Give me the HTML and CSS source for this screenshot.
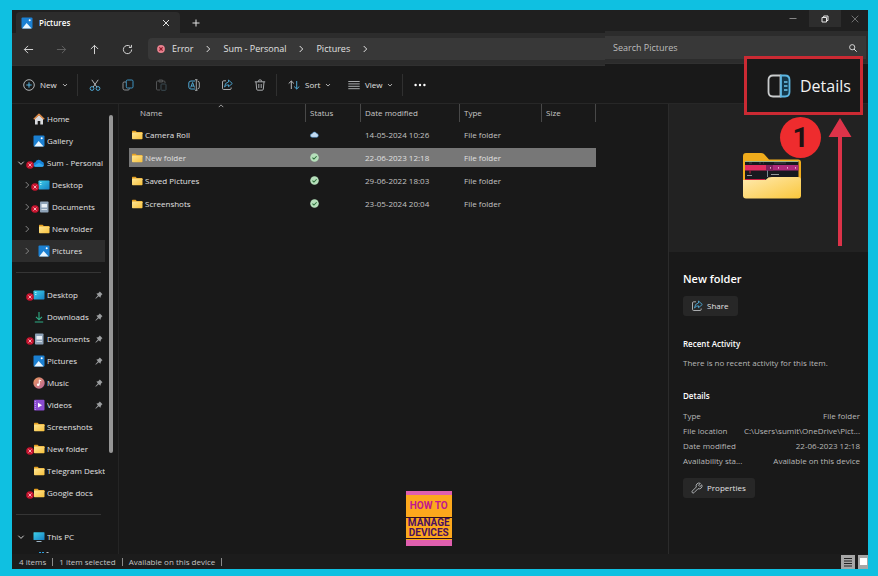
FILE: index.html
```html
<!doctype html>
<html lang="en" dir="ltr">
<head>
    <meta charset="utf-8">
    <meta name="viewport" content="width=device-width, initial-scale=1">
    <title>Pictures</title>
    <link rel="stylesheet" href="styles.css">
</head>
<body>

<!-- Icon sprite -->
<svg class="sprite" aria-hidden="true">
    <defs>
        <linearGradient id="g-folder" x1="0" y1="0" x2="1" y2="1"><stop offset="0" stop-color="#ffe694"/><stop offset="1" stop-color="#f7c03c"/></linearGradient>
        <linearGradient id="g-front" x1="0" y1="0" x2="1" y2="1"><stop offset="0" stop-color="#ffeab0"/><stop offset="1" stop-color="#fac73c"/></linearGradient>
        <linearGradient id="g-desktop" x1="0" y1="0" x2="1" y2="1"><stop offset="0" stop-color="#3fd0e8"/><stop offset="1" stop-color="#1580c4"/></linearGradient>
        <linearGradient id="g-music" x1="0" y1="0" x2="1" y2="1"><stop offset="0" stop-color="#ec9a5c"/><stop offset="1" stop-color="#b9659c"/></linearGradient>
    </defs>
    <symbol id="i-folder" viewBox="0 0 12 12"><path d="M1 2.500q0-.7.7-.7H4.600l1.200 1.200H10.800q.7 0 .7.700V5H1z" fill="#e5a020"/><rect x="1" y="3.600" width="10.500" height="6.600" rx=".7" fill="url(#g-folder)"/></symbol>
    <symbol id="i-picture" viewBox="0 0 12 12"><rect x=".5" y=".5" width="11" height="11" rx="1" fill="#1b80d2"/><path d="M1.200 11.500 5.600 6l5 5.500z" fill="#e8f6ff"/><circle cx="8.700" cy="3.200" r="1" fill="#fff"/></symbol>
    <symbol id="i-home" viewBox="0 0 12 12"><path d="M2 5.500 6 2l4 3.500v6H7.300V8H4.700v3.500H2z" fill="#d8dade"/><path d="m.8 6.300 5.200-5 5.200 5" fill="none" stroke="#e08a45" stroke-width="1.500" stroke-linejoin="round"/></symbol>
    <symbol id="i-onedrive" viewBox="0 0 12 12"><path d="M2.600 9.800a2.300 2.300 0 0 1-.3-4.600A3.600 3.600 0 0 1 8.800 4.600a2.700 2.700 0 0 1 .4 5.200z" fill="#1583da"/><path d="m1 8.800 5-3 5 3q-.7 1-1.800 1H2.600q-1 0-1.600-1z" fill="#35a8ef"/></symbol>
    <symbol id="i-desktop" viewBox="0 0 12 12"><rect x=".5" y="1.500" width="11" height="9" rx=".8" fill="url(#g-desktop)"/><path d="M2 3.500h1.500M2 5.500h1.500" stroke="#c6f4ff" stroke-width=".8"/></symbol>
    <symbol id="i-document" viewBox="0 0 12 12"><rect x="2" y=".5" width="8.500" height="11" rx=".8" fill="#8fa3b8"/><rect x="3.500" y="3" width="5.500" height="3.500" fill="#e9f0f6"/><path d="M3.500 8.500h5.500" stroke="#d3dde6"/></symbol>
    <symbol id="i-download" viewBox="0 0 12 12"><path d="M6 1v7.500M3 5.800l3 3 3-3M1.800 11h8.400" fill="none" stroke="#2fae86" stroke-width="1.100"/></symbol>
    <symbol id="i-music" viewBox="0 0 12 12"><circle cx="6" cy="6" r="5.700" fill="url(#g-music)"/><path d="M6.300 7.500V3l2 .8" fill="none" stroke="#fff"/><circle cx="5.200" cy="7.800" r="1.300" fill="#fff"/></symbol>
    <symbol id="i-video" viewBox="0 0 12 12"><rect x="1" y=".7" width="10.500" height="10.800" rx="1" fill="#8a4bd0"/><path d="M2.300 2v9" stroke="#c9a4f0" stroke-dasharray="1 1"/><path d="m5 3.800 4 2.400-4 2.400z" fill="#fff"/></symbol>
    <symbol id="i-pc" viewBox="0 0 12 12"><rect x=".5" y="1.200" width="11" height="7.800" rx=".6" fill="url(#g-desktop)"/><path d="M3.500 10.500h5" stroke="#9fb6c6"/></symbol>
    <symbol id="i-drive" viewBox="0 0 12 12"><path d="M1 1.500h2M4 1.500h2" stroke="#2c9fe0"/><path d="M8.500 1.500h2" stroke="#b9bcbe"/><rect x="1" y="3" width="10" height="6" fill="#8d9aa5"/></symbol>
    <symbol id="i-down" viewBox="0 0 8 8"><path d="m1.300 2.700 2.700 2.700 2.700-2.700" fill="none" stroke="currentColor"/></symbol>
    <symbol id="i-right" viewBox="0 0 8 8"><path d="m2.700 1 3 3-3 3" fill="none" stroke="currentColor"/></symbol>
    <symbol id="i-pin" viewBox="0 0 8 8"><path d="M4.800.5 7.500 3.200 6.700 3.800 5.800 4.900 5.500 6.700 3.700 5.200.8 7.700.4 7.300 2.900 4.400 1.400 2.600 3.200 2.200 4.200 1.300z" fill="#9c9ea0"/></symbol>
    <symbol id="i-error" viewBox="0 0 8 8"><circle cx="4" cy="4" r="3.800" fill="#c8142f"/><path d="m2.500 2.500 3 3m0-3-3 3" stroke="#ffd9de" stroke-width=".8"/></symbol>
    <symbol id="i-check" viewBox="0 0 8 8"><circle cx="4" cy="4" r="3.800" fill="#b5dfba"/><path d="m2.200 4.100 1.300 1.300 2.400-2.500" fill="none" stroke="#276b35" stroke-width=".9"/></symbol>
    <symbol id="i-cloud" viewBox="0 0 8 8"><path d="M2 6.500a1.600 1.600 0 0 1-.1-3.200 2.200 2.200 0 0 1 4.100-.1 1.700 1.700 0 0 1 .2 3.300z" fill="#c4dcf2" stroke="#4a90cb" stroke-width=".5"/></symbol>
    <symbol id="i-share" viewBox="0 0 12 12"><path d="M5 1.800H2.700q-1.200 0-1.200 1.200v6.300q0 1.200 1.200 1.200H9q1.200 0 1.200-1.200V8.500" fill="none" stroke="#b9bcbe" stroke-width=".9"/><path d="M7.500 1 11.300 4.500 7.500 7.700V5.800Q5 5.700 3.500 8 3.800 3.500 7.500 3z" fill="none" stroke="#4fa9d6" stroke-width=".9" stroke-linejoin="round"/></symbol>
</svg>

<main class="window">
    <!-- Tabs, navigation and search -->
    <header class="header">
        <div class="header-main">
            <div class="tabs">
                <div class="tab">
                    <svg class="icon"><use href="#i-picture"/></svg>
                    <span class="tab-title">Pictures</span>
                    <button class="icon-btn tab-close" aria-label="Close tab"><svg class="icon-sm" viewBox="0 0 8 8"><path d="m1 1 6 6m0-6-6 6" stroke="currentColor"/></svg></button>
                </div>
                <button class="icon-btn tab-new" aria-label="New tab"><svg class="icon-sm" viewBox="0 0 8 8"><path d="M4 .5v7M.5 4h7" stroke="currentColor"/></svg></button>
            </div>
            <div class="navigation">
                <button class="icon-btn nav-btn" aria-label="Back"><svg class="icon-nav" viewBox="0 0 12 12"><path d="M11 6H1.500M5.500 2l-4 4 4 4" fill="none" stroke="currentColor"/></svg></button>
                <button class="icon-btn nav-btn" aria-label="Forward" disabled><svg class="icon-nav" viewBox="0 0 12 12"><path d="M1 6h9.500M6.500 2l4 4-4 4" fill="none" stroke="currentColor"/></svg></button>
                <button class="icon-btn nav-btn" aria-label="Up"><svg class="icon-nav" viewBox="0 0 12 12"><path d="M6 11V1.500M2 5.500l4-4 4 4" fill="none" stroke="currentColor"/></svg></button>
                <button class="icon-btn nav-btn" aria-label="Refresh"><svg class="icon-nav" viewBox="0 0 12 12"><path d="M10.500 6a4.500 4.500 0 1 1-1.500-3.300M10.300 1v2.800H7.500" fill="none" stroke="currentColor"/></svg></button>
                <nav class="address" aria-label="Address">
                    <svg class="icon-error" viewBox="0 0 8 8"><circle cx="4" cy="4" r="3.900" fill="#e8818e"/><path d="m2.400 2.400 3.200 3.200m0-3.200L2.400 5.600" stroke="#8c1526" stroke-width="1.200"/></svg>
                    <a href="#">Error</a>
                    <svg class="icon-sm"><use href="#i-right"/></svg>
                    <a href="#">Sum - Personal</a>
                    <svg class="icon-sm"><use href="#i-right"/></svg>
                    <a href="#">Pictures</a>
                    <svg class="icon-sm"><use href="#i-right"/></svg>
                </nav>
            </div>
        </div>
        <div class="header-side">
            <div class="controls">
                <button class="icon-btn control" aria-label="Minimize"><svg class="icon-sm" viewBox="0 0 8 8"><path d="M.5 3.500h7" stroke="currentColor"/></svg></button>
                <button class="icon-btn control control-active" aria-label="Restore"><svg class="icon-sm" viewBox="0 0 8 8"><path d="M1 2.500h4.500V7H1zM2.700 2.300V1h4.300v4.500H5.700" fill="none" stroke="currentColor"/></svg></button>
                <button class="icon-btn control" aria-label="Close"><svg class="icon-sm" viewBox="0 0 8 8"><path d="m.7.7 6.600 6.600m0-6.600L.7 7.300" stroke="currentColor" stroke-width=".8"/></svg></button>
            </div>
            <div class="search-row">
                <label class="search">
                    <input type="search" class="search-input" placeholder="Search Pictures" aria-label="Search Pictures">
                    <svg class="icon-sm" viewBox="0 0 8 8"><path d="m5 5 2.700 2.700" stroke="currentColor"/><circle cx="3.200" cy="3.200" r="2.600" fill="none" stroke="currentColor" stroke-width=".9"/></svg>
                </label>
            </div>
        </div>
    </header>

    <!-- Command bar -->
    <div class="toolbar" role="toolbar" aria-label="Commands">
        <button class="tool tool-new"><svg class="icon" viewBox="0 0 12 12"><circle cx="6" cy="6" r="5.300" fill="none" stroke="#c4c7c9" stroke-width=".9"/><path d="M6 3.300v5.400M3.300 6h5.400" stroke="#58b4e0"/></svg><span>New</span><svg class="icon-xs"><use href="#i-down"/></svg></button>
        <span class="separator"></span>
        <button class="tool tool-icon" aria-label="Cut"><svg class="icon" viewBox="0 0 12 12"><path d="M2.800.8 7.800 8M9.200.8 4.200 8" stroke="#c4c7c9" stroke-width=".9"/><circle cx="3" cy="9.500" r="1.900" fill="none" stroke="#4fa9d6"/><circle cx="9" cy="9.500" r="1.900" fill="none" stroke="#4fa9d6"/></svg></button>
        <button class="tool tool-icon" aria-label="Copy"><svg class="icon" viewBox="0 0 12 12"><path d="M4 3H2.300Q1 3 1 4.300v5Q1 11 2.700 11h3.500Q7.300 11 7.500 9.500" fill="none" stroke="#8c9093"/><rect x="4.300" y="1" width="6.700" height="8" rx="1.200" fill="none" stroke="#3f93c0"/></svg></button>
        <button class="tool tool-icon tool-off" aria-label="Paste" disabled><svg class="icon" viewBox="0 0 12 12"><path d="M5 11H2.700Q1.500 11 1.500 10V3q0-1 1-1H9q1 0 1 1v1M4 1h3.500v2H4z" fill="none" stroke="#696c6e"/><rect x="6" y="5" width="5" height="6.300" rx=".8" fill="none" stroke="#48606b"/></svg></button>
        <button class="tool tool-icon" aria-label="Rename"><svg class="icon" viewBox="0 0 12 12"><path d="M7 2H3Q.8 2 .8 4v4q0 2 2.200 2H7" fill="none" stroke="#4fa9d6"/><path d="M9.500 2q1.800.3 1.800 2v4q0 1.700-1.800 2M7 .7h2.500M7 11.300h2.500M8.300.7v10.600" fill="none" stroke="#b0b4b6" stroke-width=".9"/><path d="m2.700 8.500 1.900-5 1.900 5M3.400 7h2.500" fill="none" stroke="#58b4e0" stroke-width=".9"/></svg></button>
        <button class="tool tool-icon" aria-label="Share"><svg class="icon"><use href="#i-share"/></svg></button>
        <button class="tool tool-icon" aria-label="Delete"><svg class="icon" viewBox="0 0 12 12"><path d="M.8 2.800h10.400M4.300 2.500Q4.300.8 6 .8t1.700 1.700M2 3l.7 7.200q.1 1 1 1h4.600q.9 0 1-1L10 3M4.800 5v4M7.200 5v4" fill="none" stroke="#b9bcbe" stroke-width=".9"/></svg></button>
        <span class="separator"></span>
        <button class="tool tool-sort"><svg class="icon" viewBox="0 0 12 12"><path d="M3.300 10V2M.7 4.500 3.300 2l2.600 2.500" fill="none" stroke="#b9bcbe"/><path d="M8.700 2v8M6.100 7.500 8.700 10l2.600-2.500" fill="none" stroke="#4fa9d6"/></svg><span>Sort</span><svg class="icon-xs"><use href="#i-down"/></svg></button>
        <button class="tool tool-view"><svg class="icon" viewBox="0 0 12 12"><path d="M.3 2.500h11.400M.3 4.900h11.400M.3 7.300h11.400M.3 9.700h11.400" stroke="#b9bcbe" stroke-width=".9"/></svg><span>View</span><svg class="icon-xs"><use href="#i-down"/></svg></button>
        <span class="separator"></span>
        <button class="tool tool-icon" aria-label="More"><svg class="icon" viewBox="0 0 12 12"><circle cx="1.600" cy="6" r="1.200" fill="#fff"/><circle cx="6" cy="6" r="1.200" fill="#fff"/><circle cx="10.400" cy="6" r="1.200" fill="#fff"/></svg></button>
    </div>

    <div class="content">
        <!-- Folder tree -->
        <aside class="sidebar">
            <nav class="tree" aria-label="Folders">
                <a class="tree-item" href="#"><span class="tree-arrow"></span><span class="tree-icon"><svg class="icon"><use href="#i-home"/></svg></span><span class="tree-name">Home</span></a>
                <a class="tree-item" href="#"><span class="tree-arrow"></span><span class="tree-icon"><svg class="icon"><use href="#i-picture"/></svg></span><span class="tree-name">Gallery</span></a>
                <a class="tree-item" href="#"><span class="tree-arrow open"><svg class="icon-sm"><use href="#i-down"/></svg></span><span class="tree-icon"><svg class="icon"><use href="#i-onedrive"/></svg><svg class="badge"><use href="#i-error"/></svg></span><span class="tree-name">Sum - Personal</span></a>
                <a class="tree-item nested" href="#"><span class="tree-arrow"><svg class="icon-sm"><use href="#i-right"/></svg></span><span class="tree-icon"><svg class="icon"><use href="#i-desktop"/></svg><svg class="badge"><use href="#i-error"/></svg></span><span class="tree-name">Desktop</span></a>
                <a class="tree-item nested" href="#"><span class="tree-arrow"><svg class="icon-sm"><use href="#i-right"/></svg></span><span class="tree-icon"><svg class="icon"><use href="#i-document"/></svg><svg class="badge"><use href="#i-error"/></svg></span><span class="tree-name">Documents</span></a>
                <a class="tree-item nested" href="#"><span class="tree-arrow"><svg class="icon-sm"><use href="#i-right"/></svg></span><span class="tree-icon"><svg class="icon"><use href="#i-folder"/></svg></span><span class="tree-name">New folder</span></a>
                <a class="tree-item nested selected" href="#" aria-current="page"><span class="tree-arrow"><svg class="icon-sm"><use href="#i-right"/></svg></span><span class="tree-icon"><svg class="icon"><use href="#i-picture"/></svg></span><span class="tree-name">Pictures</span></a>
                <hr class="tree-line">
                <a class="tree-item" href="#"><span class="tree-arrow"></span><span class="tree-icon"><svg class="icon"><use href="#i-desktop"/></svg><svg class="badge"><use href="#i-error"/></svg></span><span class="tree-name">Desktop</span><svg class="icon-sm"><use href="#i-pin"/></svg></a>
                <a class="tree-item" href="#"><span class="tree-arrow"></span><span class="tree-icon"><svg class="icon"><use href="#i-download"/></svg></span><span class="tree-name">Downloads</span><svg class="icon-sm"><use href="#i-pin"/></svg></a>
                <a class="tree-item" href="#"><span class="tree-arrow"></span><span class="tree-icon"><svg class="icon"><use href="#i-document"/></svg><svg class="badge"><use href="#i-error"/></svg></span><span class="tree-name">Documents</span><svg class="icon-sm"><use href="#i-pin"/></svg></a>
                <a class="tree-item" href="#"><span class="tree-arrow"></span><span class="tree-icon"><svg class="icon"><use href="#i-picture"/></svg></span><span class="tree-name">Pictures</span><svg class="icon-sm"><use href="#i-pin"/></svg></a>
                <a class="tree-item" href="#"><span class="tree-arrow"></span><span class="tree-icon"><svg class="icon"><use href="#i-music"/></svg></span><span class="tree-name">Music</span><svg class="icon-sm"><use href="#i-pin"/></svg></a>
                <a class="tree-item" href="#"><span class="tree-arrow"></span><span class="tree-icon"><svg class="icon"><use href="#i-video"/></svg></span><span class="tree-name">Videos</span><svg class="icon-sm"><use href="#i-pin"/></svg></a>
                <a class="tree-item" href="#"><span class="tree-arrow"></span><span class="tree-icon"><svg class="icon"><use href="#i-folder"/></svg></span><span class="tree-name">Screenshots</span></a>
                <a class="tree-item" href="#"><span class="tree-arrow"></span><span class="tree-icon"><svg class="icon"><use href="#i-folder"/></svg><svg class="badge"><use href="#i-error"/></svg></span><span class="tree-name">New folder</span></a>
                <a class="tree-item" href="#"><span class="tree-arrow"></span><span class="tree-icon"><svg class="icon"><use href="#i-folder"/></svg></span><span class="tree-name">Telegram Desktop</span></a>
                <a class="tree-item" href="#"><span class="tree-arrow"></span><span class="tree-icon"><svg class="icon"><use href="#i-folder"/></svg><svg class="badge"><use href="#i-error"/></svg></span><span class="tree-name">Google docs</span></a>
                <hr class="tree-line">
                <a class="tree-item" href="#"><span class="tree-arrow open"><svg class="icon-sm"><use href="#i-down"/></svg></span><span class="tree-icon"><svg class="icon"><use href="#i-pc"/></svg></span><span class="tree-name">This PC</span></a>
                <a class="tree-item nested" href="#" aria-label="Drive"><span class="tree-arrow"></span><span class="tree-icon drive"><svg class="icon"><use href="#i-drive"/></svg></span></a>
            </nav>
            <div class="scrollbar"><div class="scrollbar-thumb"></div></div>
        </aside>

        <!-- File list -->
        <section class="files">
            <table class="file-table">
                <thead>
                    <tr>
                        <th class="col-name"><span>Name</span><svg class="sort-mark" viewBox="0 0 8 8"><path d="m1 5.500 3-3 3 3" fill="none" stroke="currentColor"/></svg></th>
                        <th class="col-status">Status</th>
                        <th class="col-date">Date modified</th>
                        <th class="col-type">Type</th>
                        <th class="col-size">Size</th>
                    </tr>
                </thead>
                <tbody>
                    <tr>
                        <td><span class="file-name"><svg class="icon"><use href="#i-folder"/></svg>Camera Roll</span></td>
                        <td><svg class="icon-status" role="img" aria-label="Online only"><use href="#i-cloud"/></svg></td>
                        <td>14-05-2024 10:26</td><td>File folder</td><td></td>
                    </tr>
                    <tr class="selected">
                        <td><span class="file-name"><svg class="icon"><use href="#i-folder"/></svg>New folder</span></td>
                        <td><svg class="icon-status" role="img" aria-label="Available"><use href="#i-check"/></svg></td>
                        <td>22-06-2023 12:18</td><td>File folder</td><td></td>
                    </tr>
                    <tr>
                        <td><span class="file-name"><svg class="icon"><use href="#i-folder"/></svg>Saved Pictures</span></td>
                        <td><svg class="icon-status" role="img" aria-label="Available"><use href="#i-check"/></svg></td>
                        <td>29-06-2022 18:03</td><td>File folder</td><td></td>
                    </tr>
                    <tr>
                        <td><span class="file-name"><svg class="icon"><use href="#i-folder"/></svg>Screenshots</span></td>
                        <td><svg class="icon-status" role="img" aria-label="Available"><use href="#i-check"/></svg></td>
                        <td>23-05-2024 20:04</td><td>File folder</td><td></td>
                    </tr>
                </tbody>
            </table>
        </section>

        <!-- Details pane -->
        <aside class="details">
            <div class="preview">
                <svg class="preview-folder" viewBox="0 0 58 46">
                    <path d="M0 3q0-3 3-3h15q2 0 3.500 1.500L26 6.500h29q3 0 3 3V40H0z" fill="#f0ac1c"/>
                    <rect x="2" y="8" width="53.500" height="24" fill="#17191f"/>
                    <path d="M2 8h53.500v1H2z" fill="#9db58a"/>
                    <path d="M2 12h21v5.500H2z" fill="#e22c60"/><path d="M23 12h32.500v5.500H23z" fill="#ae2a7a"/><path d="M23 12h7v5.500h-7z" fill="#7d205c"/>
                    <path d="M6 10h3m7 0h2m2 0h1m10 0h12" stroke="#777" stroke-width=".5"/>
                    <path d="M27 14.800h1m7 0h1m8 0h1m7 0h1" stroke="#ffd4ec" stroke-width="1.200"/>
                    <path d="M4 22.500h5m19-1h8" stroke="#b5b7ba" stroke-width=".8"/><path d="M7 17.500v3M2 26.500h20" stroke="#c71f43"/>
                    <path d="M24.500 17.500V24" stroke="#768a94"/>
                    <path d="M0 27h21q2 0 3.300-1.500l1-1Q26.600 24 29 24h26q3 0 3 3v15.500q0 3-3 3H3q-3 0-3-3z" fill="url(#g-front)"/>
                </svg>
            </div>
            <div class="details-body">
                <h1 class="details-title">New folder</h1>
                <button class="action"><svg class="icon"><use href="#i-share"/></svg>Share</button>
                <h2 class="details-heading">Recent Activity</h2>
                <p class="details-text">There is no recent activity for this item.</p>
                <h2 class="details-heading">Details</h2>
                <dl class="props">
                    <div class="prop"><dt>Type</dt><dd>File folder</dd></div>
                    <div class="prop"><dt>File location</dt><dd>C:\Users\sumit\OneDrive\Pict...</dd></div>
                    <div class="prop"><dt>Date modified</dt><dd>22-06-2023 12:18</dd></div>
                    <div class="prop"><dt>Availability sta...</dt><dd>Available on this device</dd></div>
                </dl>
                <button class="action"><svg class="icon" viewBox="0 0 12 12"><path d="M10.800 2.800 8.900 4.600 7.500 3.200 9.300 1.300Q7.400.4 5.900 1.900 4.700 3.200 5.300 5L1.300 9q-.8.900 0 1.700.9.800 1.700 0l4-4q1.900.6 3.200-.7 1.400-1.400.6-3.200z" fill="none" stroke="#b9bcbe" stroke-width=".9" stroke-linejoin="round"/></svg>Properties</button>
            </div>
        </aside>
    </div>

    <!-- Status bar -->
    <footer class="status">
        <span>4 items</span><span class="status-line"></span>
        <span>1 item selected</span><span class="status-line"></span>
        <span>Available on this device</span><span class="status-line"></span>
        <div class="views">
            <button class="icon-btn view-btn view-list" aria-label="Details view"><svg class="icon" viewBox="0 0 12 12"><path d="M2 2.500h8M2 5h8M2 7.500h8M2 10h8" stroke="#222"/></svg></button>
            <button class="icon-btn view-btn view-tiles" aria-label="Large icons"><span class="tile"></span></button>
        </div>
    </footer>

    <!-- Callouts over the window -->
    <button class="callout">
        <svg class="callout-icon" viewBox="0 0 24 24"><path d="M13.500 1.500H6Q1.500 1.500 1.500 6v12q0 4.500 4.500 4.500h7.500z" fill="none" stroke="#c9cccd" stroke-width="1.800"/><path d="M14 1.500h4Q22.500 1.500 22.500 6v12q0 4.500-4.500 4.500h-4z" fill="#14384b" stroke="#5cb6e2" stroke-width="1.800"/><path d="M17 8h3.500M17 12h3.500M17 16h3.500" stroke="#6ec6ee" stroke-width="1.500"/></svg>
        Details
    </button>
    <span class="step">1</span>
    <svg class="arrow" viewBox="0 0 24 128" aria-hidden="true"><path d="M12 0 23.500 19H14v109h-4V19H.5z" fill="#dd3349"/></svg>
    <div class="brand"><span class="brand-top">HOW TO</span><span class="brand-name">MANAGE<br>DEVICES</span></div>
</main>

</body>
</html>
```
FILE: styles.css
```css
:root {
    --frame: #0fc0e1;
    --bg: #191919;
    --bg-strip: #1f1f1f;
    --bg-nav: #2c2c2c;
    --bg-field: #383838;
    --bg-button: #272727;
    --line: #303030;
    --text: #e2e2e2;
    --muted: #b8b8b8;
    --red: #cb2a33;
}

* {
    box-sizing: border-box;
}

body {
    margin: 0;
    padding: 10px 10px 7px 12px;
    height: 100vh;
    background: var(--frame);
    color: var(--text);
    font-family: "Open Sans", "Noto Sans", sans-serif;
    font-size: 8px;
    line-height: 12px;
}

a {
    color: inherit;
    text-decoration: none;
}

button {
    padding: 0;
    border: 0;
    background: none;
    color: inherit;
    font: inherit;
}

svg {
    display: block;
    flex-shrink: 0;
}

.sprite {
    position: absolute;
    width: 0;
    height: 0;
}

.icon {
    width: 12px;
    height: 12px;
}

.icon-nav {
    width: 11px;
    height: 11px;
}

.icon-sm,
.icon-error {
    width: 8px;
    height: 8px;
}

.icon-status {
    width: 9px;
    height: 9px;
}

.icon-xs {
    width: 6px;
    height: 6px;
}

.icon-btn {
    display: flex;
    align-items: center;
    justify-content: center;
}

.window {
    position: relative;
    display: flex;
    flex-direction: column;
    height: 100%;
    overflow: hidden;
    background: var(--bg);
}

/* Header */
.header {
    display: flex;
    align-items: flex-start;
}

.header-main {
    flex: 1;
    min-width: 0;
}

.tabs {
    display: flex;
    align-items: flex-end;
    height: 23px;
    padding-left: 4px;
    background: var(--bg-strip);
}

.tab {
    display: flex;
    align-items: center;
    gap: 6px;
    width: 164px;
    height: 21px;
    padding: 0 10px 0 5px;
    border-radius: 4px 4px 0 0;
    background: var(--bg-nav);
}

.tab-title {
    flex: 1;
    color: #fff;
    font-weight: 600;
}

.tab-new {
    width: 32px;
    height: 21px;
}

.navigation {
    display: flex;
    align-items: center;
    height: 33px;
    border-bottom: 1px solid var(--line);
    background: var(--bg-nav);
}

.nav-btn {
    width: 33px;
    height: 22px;
}

.nav-btn:disabled {
    color: #666;
}

.address {
    display: flex;
    flex: 1;
    align-items: center;
    gap: 11px;
    height: 22px;
    margin-left: 4px;
    padding-left: 9px;
    border-radius: 4px 0 0 4px;
    background: var(--bg-field);
    font-size: 9px;
}

.icon-error {
    margin-right: -4px;
}

.header-side {
    width: 31%;
    max-width: 263px;
}

.controls {
    display: flex;
    justify-content: flex-end;
    height: 21px;
    background: var(--bg-strip);
    color: #858585;
}

.control {
    width: 32px;
    height: 17px;
}

.control:last-child {
    width: 27px;
}

.control-active {
    background: #2d2d2d;
    color: #e6e6e6;
}

.search-row {
    height: 33px;
    padding: 5px 2px 4px 0;
    border-bottom: 1px solid var(--line);
    background: var(--bg-nav);
}

.search {
    display: flex;
    align-items: center;
    height: 23px;
    padding: 0 9px 0 8px;
    background: var(--bg-field);
}

.search-input {
    flex: 1;
    min-width: 0;
    padding: 0;
    border: 0;
    outline: 0;
    background: none;
    color: inherit;
    font: inherit;
    font-size: 9px;
}

.search-input::placeholder {
    color: #bdbdbd;
}

/* Toolbar */
.toolbar {
    display: flex;
    align-items: center;
    height: 38px;
    border-bottom: 1px solid #272727;
}

.tool {
    display: flex;
    align-items: center;
    height: 24px;
    gap: 5px;
}

.tool-icon {
    justify-content: center;
    width: 33px;
}

.tool-off {
    opacity: 0.7;
}

.tool-new {
    width: 65px;
    padding-left: 11px;
}

.tool-sort {
    width: 60px;
    padding-left: 11px;
}

.tool-view {
    width: 65px;
    padding-left: 11px;
}

.separator {
    width: 1px;
    height: 22px;
    background: var(--line);
}

/* Content columns */
.content {
    display: flex;
    flex: 1;
    min-height: 0;
}

.sidebar {
    display: flex;
    width: 107px;
    flex-shrink: 0;
    border-right: 1px solid #252525;
    overflow: hidden;
}

.tree {
    width: 93px;
    padding-top: 4px;
}

.tree-item {
    display: flex;
    align-items: center;
    height: 22px;
    padding-left: 5px;
}

.tree-item.nested {
    padding-left: 11px;
}

.tree-item.selected {
    background: #2d2d2d;
}

.tree-arrow {
    width: 16px;
    flex-shrink: 0;
    color: #858585;
}

.tree-arrow.open {
    color: #d0d0d0;
}

.nested .tree-arrow {
    width: 15px;
}

.tree-icon {
    position: relative;
    margin-right: 2px;
}

.drive {
    align-self: flex-start;
}

.drive .icon {
    margin-top: 3px;
}

/* Sync error mark over the icon */
.badge {
    position: absolute;
    bottom: 0;
    left: -7px;
    width: 8px;
    height: 8px;
}

.tree-name {
    flex: 1;
    min-width: 0;
    overflow: hidden;
    white-space: nowrap;
}

.tree-item > .icon-sm {
    margin-right: 2px;
}

.tree-line {
    height: 1px;
    margin: 10px 4px 11px;
    border: 0;
    background: #353535;
}

.scrollbar {
    padding: 11px 0 0 4px;
}

.scrollbar-thumb {
    width: 4px;
    height: 77%;
    border-radius: 2px;
    background: #969696;
}

/* File list */
.files {
    flex: 1;
    min-width: 0;
    padding-left: 10px;
}

.file-table {
    border-spacing: 0;
    table-layout: fixed;
    width: 467px;
}

.file-table th {
    height: 19px;
    padding: 0 0 2px 4px;
    background: linear-gradient(#484848, #484848) right top / 1px 18px no-repeat;
    font-weight: 400;
    text-align: left;
    color: #c8c8c8;
}

.file-table .col-name {
    position: relative;
    width: 177px;
    padding-left: 11px;
}

.sort-mark {
    position: absolute;
    top: -1px;
    left: 50%;
    width: 6px;
    height: 6px;
}

.col-status {
    width: 55px;
}

.col-date {
    width: 99px;
}

.col-type {
    width: 82px;
}

.file-table td {
    height: 23px;
    padding: 0 0 0 4px;
    border: solid var(--bg);
    border-width: 2px 0;
    color: #c4c4c4;
}

.file-table td:first-child {
    padding-left: 2px;
    color: var(--text);
}

.file-table .selected td {
    background: #777;
    color: #e0e0e0;
}

.file-name {
    display: flex;
    align-items: center;
    gap: 2px;
}

/* Details pane */
.details {
    width: 200px;
    flex-shrink: 0;
    border-left: 1px solid #2b2b2b;
}

.preview {
    display: flex;
    align-items: center;
    justify-content: center;
    height: 148px;
    padding: 0 0 4px 6px;
    background: #222;
}

.preview-folder {
    width: 58px;
    height: 46px;
}

.details-body {
    padding: 19px 8px 0 14px;
}

.details-title {
    margin: 0 0 9px;
    color: #fff;
    font-size: 11px;
    font-weight: 600;
    line-height: 16px;
}

.action {
    display: inline-flex;
    align-items: center;
    gap: 4px;
    height: 20px;
    padding: 0 9px 0 8px;
    border-radius: 3px;
    background: var(--bg-button);
}

.details-heading {
    margin: 22px 0 0;
    color: #fff;
    font-size: 8px;
    font-weight: 600;
    line-height: 12px;
}

.details-text {
    margin: 7px 0 0;
    color: var(--muted);
}

.details-text + .details-heading {
    margin-top: 21px;
}

.props {
    margin: 6px 0 10px;
    color: var(--muted);
}

.prop {
    display: flex;
    justify-content: space-between;
    line-height: 15px;
    white-space: nowrap;
}

.prop dd {
    margin: 0;
}

/* Status bar */
.status {
    display: flex;
    align-items: center;
    gap: 6px;
    height: 15px;
    padding-left: 7px;
    background: #1c1c1c;
    color: #c4c4c4;
}

.status-line {
    width: 1px;
    height: 8px;
    background: #8a8a8a;
}

.views {
    display: flex;
    gap: 3px;
    margin-left: auto;
}

.view-btn {
    height: 14px;
    background: #a6a6a6;
}

.view-list {
    width: 14px;
}

.view-tiles {
    width: 10px;
}

.tile {
    width: 7px;
    height: 7px;
    background: #fff;
}

/* Callouts */
.callout {
    position: absolute;
    top: 46px;
    right: 5px;
    display: flex;
    align-items: center;
    gap: 9px;
    width: 119px;
    height: 59px;
    padding-left: 20px;
    border: 3px solid var(--red);
    background: var(--bg);
    color: #f2f2f2;
    font-size: 16px;
}

.callout-icon {
    width: 24px;
    height: 24px;
}

.step {
    position: absolute;
    top: 107px;
    right: 47px;
    width: 41px;
    height: 41px;
    border-radius: 50%;
    background: #ee2c2e;
    color: #1d1213;
    font-family: Roboto, sans-serif;
    font-size: 28px;
    font-weight: 700;
    line-height: 41px;
    text-align: center;
}

.arrow {
    position: absolute;
    top: 108px;
    right: 16px;
    width: 24px;
    height: 128px;
}

.brand {
    position: absolute;
    bottom: 23px;
    left: 46%;
    display: flex;
    flex-direction: column;
    width: 46px;
    height: 55px;
    border: solid #e05fae;
    border-width: 4px 0 6px;
    background: #fda81c;
    font-family: Roboto, sans-serif;
    font-weight: 700;
    text-align: center;
}

.brand-top {
    color: #c2188f;
    font-size: 10px;
    line-height: 22px;
}

.brand-name {
    border: solid #2c1020;
    border-width: 1px 0;
    color: #4a1060;
    font-size: 10px;
    line-height: 10px;
}
```
